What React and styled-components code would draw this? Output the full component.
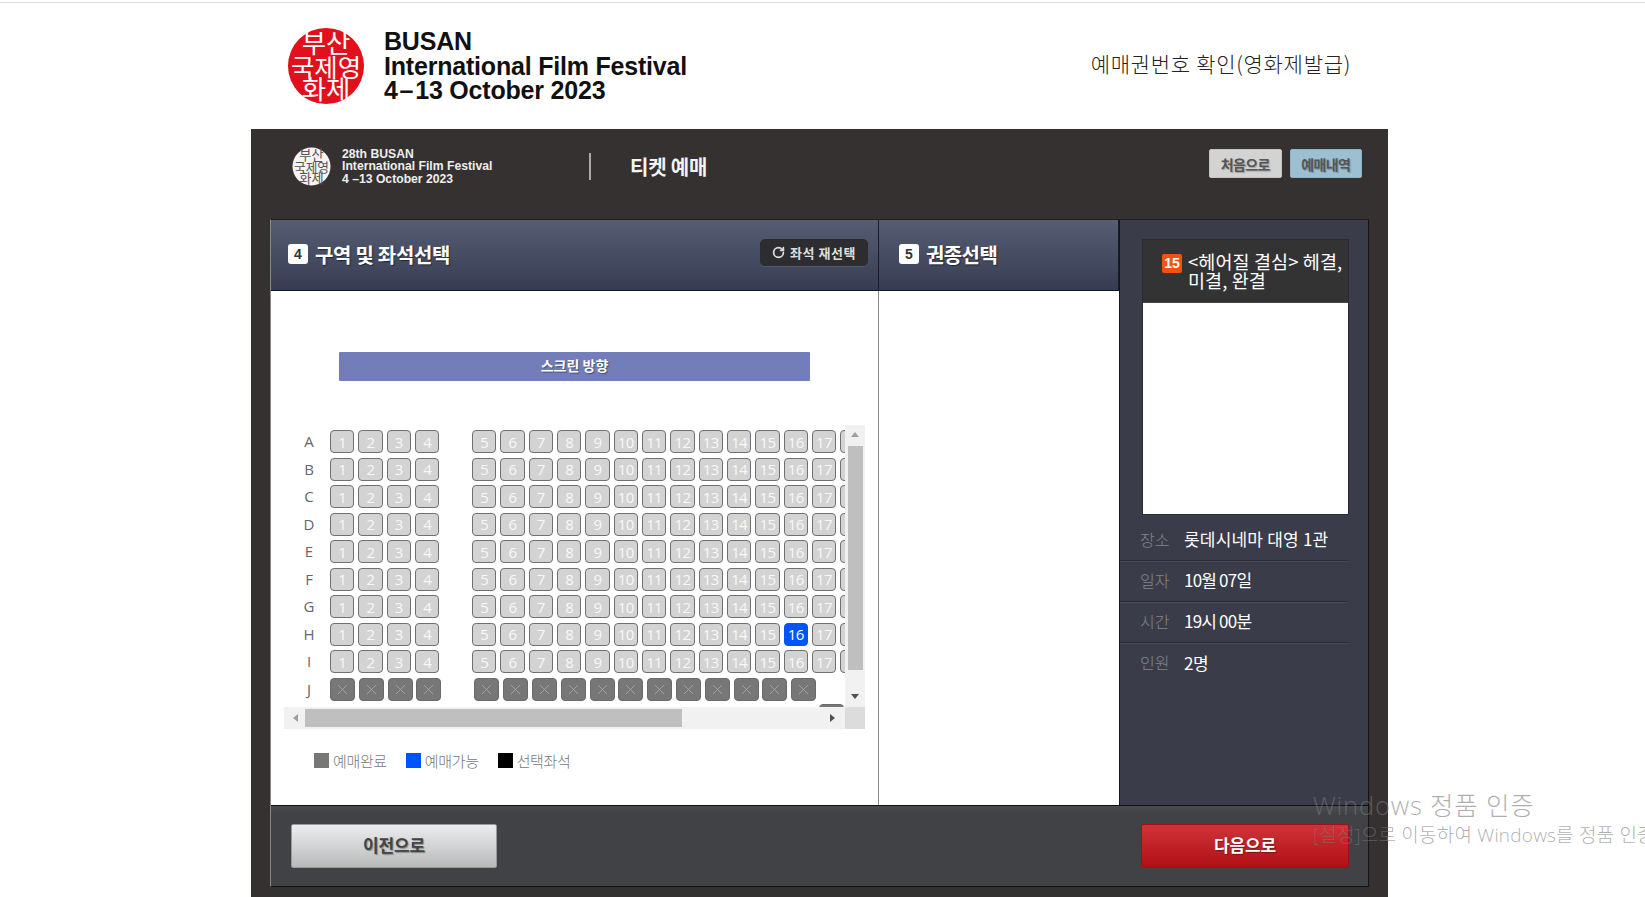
import React from 'react';
import styled, { createGlobalStyle } from 'styled-components';
import { RotateCw, X } from 'lucide-react';

const KR = `"Noto Sans CJK KR", "Liberation Sans", sans-serif`;

const GlobalStyle = createGlobalStyle`
    html, body {
        margin: 0;
        padding: 0;
        height: 897px;
        overflow: hidden;
        background: #fff;
        font-family: ${KR};
    }
    * { box-sizing: border-box; }
`;

const Page = styled.div`
    position: relative;
    width: 1645px;
    height: 897px;
    overflow: hidden;
    padding-top: 2px;
`;

const TopLine = styled.div`
    height: 1px;
    background: #dcdcdc;
`;

const Header = styled.header`
    width: 1137px;
    height: 126px;
    margin-left: 251px;
    padding: 0 37px 0 36px;
    display: flex;
    align-items: center;
    justify-content: space-between;
`;

const LogoRow = styled.div`
    display: flex;
    align-items: center;
    gap: ${p => p.$gap}px;
`;

const SmallLogoRow = styled(LogoRow)`
    margin-top: -2px;
`;

const BigLogoText = styled.div`
    font-family: "Liberation Sans", Arial, sans-serif;
    font-weight: bold;
    font-size: 25px;
    line-height: 24.5px;
    color: #111;
    letter-spacing: -0.2px;
`;

const TicketLink = styled.a`
    font-size: 21px;
    font-weight: 300;
    color: #222;
    letter-spacing: 0.7px;
    margin-top: -6px;
`;

const Panel = styled.div`
    width: 1137px;
    height: 768px;
    margin-left: 251px;
    background: #353131;
    padding-left: 19px;
`;

const TopBar = styled.div`
    height: 90px;
    width: 1092px;
    display: flex;
    align-items: flex-start;
    padding: 20px 0 0 22px;
`;

const SmallLogoText = styled.div`
    font-family: "Liberation Sans", Arial, sans-serif;
    font-weight: bold;
    font-size: 12.2px;
    line-height: 12.4px;
    color: #eee;
    width: 247px;
`;

const BarDivider = styled.span`
    width: 2px;
    height: 27px;
    margin: 4px 39px 0 0;
    background: #aaa;
`;

const TicketTitle = styled.h1`
    margin: 4px 0 0;
    font-size: 20px;
    line-height: 28px;
    font-weight: bold;
    color: #f4f4f4;
    letter-spacing: -0.2px;
`;

const TopActions = styled.div`
    margin-left: auto;
    display: flex;
    gap: 8px;
`;

const TopButton = styled.button`
    width: 72.5px;
    height: 29px;
    padding: 0;
    border: 1px solid ${p => (p.$blue ? '#8fb2c5' : '#c4c4c4')};
    border-radius: 2px;
    background: ${p => (p.$blue ? '#9dbfd2' : '#d3d3d3')};
    color: #555;
    font-family: ${KR};
    font-size: 14px;
    font-weight: bold;
    letter-spacing: -0.6px;
    text-shadow: 1px 1px 1px rgba(0, 0, 0, 0.25);
`;

const Main = styled.div`
    width: 1099px;
    height: 668px;
    border: 1px solid #141414;
    border-left-color: #8a8880;
    border-top-color: #1e1e1e;
`;

const Columns = styled.div`
    display: grid;
    grid-template-columns: 608px 240px 249px;
    height: 585px;
`;

const SeatColumn = styled.section`
    display: flex;
    flex-direction: column;
    min-width: 0;
    background: #fff;
`;

const ColHeader = styled.div`
    height: 71px;
    flex: none;
    display: flex;
    align-items: center;
    padding: 0 10px 2px ${p => p.$pad}px;
    border-bottom: 1px solid #15161c;
    border-right: 1px solid #1c1d24;
    background: linear-gradient(#565e74, #373c52);
`;

const StepBadge = styled.span`
    width: 20px;
    height: 20px;
    border-radius: 3px;
    background: #fff;
    color: #333;
    font-family: "Liberation Sans", sans-serif;
    font-size: 14px;
    font-weight: bold;
    display: flex;
    align-items: center;
    justify-content: center;
    margin-right: 7px;
`;

const ColTitle = styled.h2`
    margin: 0;
    font-size: 20px;
    font-weight: bold;
    color: #fff;
    letter-spacing: ${p => p.$spacing}px;
    text-shadow: 1px 1px 1px rgba(0, 0, 0, 0.5);
`;

const ResetButton = styled.button`
    margin: -2px 0 0 auto;
    width: 108px;
    height: 28px;
    padding: 0;
    display: flex;
    align-items: center;
    justify-content: center;
    gap: 5px;
    border: 0;
    border-bottom: 1px solid #555a6c;
    border-radius: 5px;
    background: #2d2d2f;
    color: #ddd;
    font-family: ${KR};
    font-size: 13px;
    font-weight: bold;
    letter-spacing: 0.5px;
`;

const ColBody = styled.div`
    flex: 1;
    border-right: 1px solid #8a8a8a;
`;

const SeatBody = styled(ColBody)`
    padding: 61px 0 0 13px;
`;

const ScreenBar = styled.div`
    width: 471px;
    height: 29px;
    margin-left: 55px;
    background: #727dba;
    border-radius: 1px;
    color: #fff;
    font-size: 14px;
    font-weight: bold;
    letter-spacing: 0;
    line-height: 27px;
    text-align: center;
    text-shadow: 1px 1px 1px rgba(0, 0, 0, 0.4);
`;

const ScrollBox = styled.div`
    width: 581px;
    height: 304px;
    margin-top: 44px;
    display: grid;
    grid-template-columns: 561px 20px;
    grid-template-rows: 282px 22px;
`;

const SeatViewport = styled.div`
    overflow: hidden;
    padding-top: 5px;
`;

const SeatRow = styled.div`
    display: flex;
    height: 23px;
    margin-bottom: 4.5px;
    width: 620px;
    padding-left: ${p => p.$indent || 0}px;
    margin-top: ${p => (p.$indent ? -1 : 0)}px;
`;

const RowLabel = styled.span`
    flex: none;
    width: 46px;
    padding-left: 4px;
    text-align: center;
    font-family: "Open Sans", sans-serif;
    font-size: 15px;
    line-height: 23px;
    color: #666;
`;

const Seat = styled.span`
    flex: none;
    height: 23px;
    width: ${p => (p.$sold ? 25 : 24.33)}px;
    margin-right: ${p => (p.$sold ? 3.8 : 4)}px;
    margin-left: ${p => (p.$aisle ? (p.$sold ? 29.2 : 28.7) : 0)}px;
    padding-top: ${p => (p.$sold ? 0 : 1)}px;
    border-radius: 4px;
    border: 1px solid ${p => (p.$selected ? '#0054ff' : p.$sold ? '#6a6a6a' : '#707070')};
    background: ${p => (p.$selected ? '#0054ff' : p.$sold ? '#777' : '#d3d3d3')};
    color: ${p => (p.$sold ? '#a8a8a8' : p.$selected ? '#fff' : '#f8f8f8')};
    font-family: "Open Sans", sans-serif;
    font-size: 15px;
    line-height: 21px;
    letter-spacing: -0.6px;
    text-align: center;
    display: flex;
    align-items: center;
    justify-content: center;
    overflow: hidden;
`;

const ScrollTrack = styled.div`
    background: #f1f1f1;
    display: flex;
    flex-direction: column;
    align-items: center;
    padding: 7px 0 8px;
`;

const ScrollThumbV = styled.div`
    width: 15px;
    height: 224px;
    margin: 9px 0 auto;
    background: #bfbfbf;
`;

const ScrollTrackH = styled.div`
    background: #f1f1f1;
    display: flex;
    align-items: center;
    padding: 0 10px 0 9px;
`;

const ScrollThumbH = styled.div`
    width: 377px;
    height: 18px;
    margin: 0 auto 0 7px;
    background: #bfbfbf;
`;

const ScrollCorner = styled.div`
    background: #dcdcdc;
`;

const Arrow = styled.span`
    width: 0;
    height: 0;
    border-style: solid;
    border-color: transparent;
    ${p => p.$dir === 'up' && 'border-width: 0 4.5px 5px; border-bottom-color: #a0a0a0;'}
    ${p => p.$dir === 'down' && 'border-width: 5px 4.5px 0; border-top-color: #505050;'}
    ${p => p.$dir === 'left' && 'border-width: 4.5px 5px 4.5px 0; border-right-color: #a0a0a0;'}
    ${p => p.$dir === 'right' && 'border-width: 4.5px 0 4.5px 5px; border-left-color: #505050;'}
`;

const Legend = styled.div`
    display: flex;
    margin: 24px 0 0 30px;
    gap: 19px;
`;

const LegendItem = styled.div`
    display: flex;
    align-items: center;
    gap: 4px;
    height: 15px;
    font-size: 15px;
    font-weight: 300;
    color: #777;
    letter-spacing: -0.35px;
`;

const Swatch = styled.i`
    width: 15px;
    height: 15px;
    background: ${p => p.$color};
`;

const InfoColumn = styled.aside`
    background: #3a3d49;
    border-left: 1px solid #15161c;
    padding-top: 19px;
`;

const MovieBox = styled.div`
    width: 207px;
    height: 276px;
    margin-left: 22px;
    border: 1px solid #2a2b30;
    background: #fff;
    display: flex;
    flex-direction: column;
`;

const MovieHead = styled.div`
    height: 63px;
    flex: none;
    background: #333;
    padding: 12px 0 0 19px;
    display: flex;
    gap: 6px;
    border-bottom: 1px solid #45454a;
`;

const AgeBadge = styled.span`
    flex: none;
    width: 20px;
    height: 19px;
    margin-top: 2px;
    border-radius: 2px;
    background: #f0520f;
    color: #fff;
    font-family: "Liberation Sans", sans-serif;
    font-size: 14px;
    font-weight: bold;
    line-height: 19px;
    text-align: center;
`;

const MovieTitle = styled.div`
    color: #fff;
    font-size: 18.5px;
    line-height: 19px;
    letter-spacing: 0.1px;
    white-space: nowrap;
`;

const InfoList = styled.dl`
    margin: 5px 0 0;
    width: 227px;
`;

const InfoRow = styled.div`
    height: 41px;
    display: flex;
    align-items: center;
    padding: 0 0 3px 20px;
    border-bottom: ${p => (p.$last ? '0' : '1px solid #2a2c35')};
    box-shadow: ${p => (p.$last ? 'none' : '0 1px 0 #494c58')};
`;

const InfoLabel = styled.dt`
    width: 44px;
    font-size: 16px;
    font-weight: 300;
    color: #84858c;
`;

const InfoValue = styled.dd`
    margin: 0;
    font-size: 17px;
    color: #fff;
    letter-spacing: ${p => p.$spacing}px;
`;

const BottomBar = styled.div`
    height: 81px;
    display: flex;
    align-items: flex-start;
    justify-content: space-between;
    padding: 18px 19px 0 20px;
    border-top: 1px solid #111;
    background: linear-gradient(#4a4b4f 0, #414246 8px);
`;

const NavButton = styled.button`
    width: ${p => (p.$primary ? 208 : 206)}px;
    height: 44px;
    padding: 0 0 4px;
    border-radius: 2px;
    border: 1px solid ${p => (p.$primary ? '#a01015' : '#999')};
    background: ${p => (p.$primary
        ? 'linear-gradient(#cf3339, #b01015)'
        : 'linear-gradient(#ecedef, #b8b9b9)')};
    color: ${p => (p.$primary ? '#fff' : '#444')};
    font-family: ${KR};
    font-size: 17px;
    font-weight: bold;
    letter-spacing: -0.2px;
    text-shadow: 1px 1px 1px rgba(0, 0, 0, 0.35);
`;

const Watermark = styled.div`
    position: absolute;
    left: 1313px;
    top: 787px;
    width: 340px;
    white-space: nowrap;
    pointer-events: none;
    color: rgba(120, 120, 120, 0.6);
    font-family: "Open Sans", ${KR};
    font-weight: 300;
`;

const WatermarkTitle = styled.div`
    font-size: 25.5px;
    line-height: 36px;
    letter-spacing: 0.8px;
`;

const WatermarkSub = styled.div`
    font-size: 19px;
    line-height: 24px;
    letter-spacing: 0.2px;
`;

const Seal = ({ size, fill, ink }) => (
    <svg width={size} height={size} viewBox="0 0 80 80">
        <circle cx="40" cy="40" r="39" fill={fill} />
        <g fill={ink} fontFamily={KR} fontWeight="400" textAnchor="middle">
            <text x="40" y="27" fontSize="27" textLength="50" lengthAdjust="spacingAndGlyphs">부산</text>
            <text x="40" y="51" fontSize="26" textLength="72" lengthAdjust="spacingAndGlyphs">국제영</text>
            <text x="40" y="74" fontSize="27" textLength="50" lengthAdjust="spacingAndGlyphs">화제</text>
        </g>
    </svg>
);

const LEFT_SEATS = [1, 2, 3, 4];
const RIGHT_SEATS = [5, 6, 7, 8, 9, 10, 11, 12, 13, 14, 15, 16, 17, 18];
const ROWS = ['A', 'B', 'C', 'D', 'E', 'F', 'G', 'H', 'I'];
const SOLD_RIGHT = Array.from({ length: 12 }, (_, i) => i);

const INFO = [
    ['장소', '롯데시네마 대영 1관', 0.2],
    ['일자', '10월 07일', -0.8],
    ['시간', '19시 00분', -0.8],
    ['인원', '2명', -0.5],
];

const SoldMark = () => <X size={17} strokeWidth={1.2} />;

export default function App() {
    return (
        <Page>
            <GlobalStyle />
            <TopLine />
            <Header>
                <LogoRow $gap={19}>
                    <Seal size={78} fill="#e2101c" ink="#fff" />
                    <BigLogoText>
                        BUSAN<br />
                        International Film Festival<br />
                        4{'\u200A'}–{'\u200A'}13 October 2023
                    </BigLogoText>
                </LogoRow>
                <TicketLink>예매권번호 확인(영화제발급)</TicketLink>
            </Header>
            <Panel>
                <TopBar>
                    <SmallLogoRow $gap={11}>
                        <Seal size={39} fill="#f4f4f4" ink="#555" />
                        <SmallLogoText>
                            28th BUSAN<br />
                            International Film Festival<br />
                            4 –13 October 2023
                        </SmallLogoText>
                    </SmallLogoRow>
                    <BarDivider />
                    <TicketTitle>티켓 예매</TicketTitle>
                    <TopActions>
                        <TopButton>처음으로</TopButton>
                        <TopButton $blue>예매내역</TopButton>
                    </TopActions>
                </TopBar>
                <Main>
                    <Columns>
                        <SeatColumn>
                            <ColHeader $pad={17}>
                                <StepBadge>4</StepBadge>
                                <ColTitle $spacing={-0.3}>구역 및 좌석선택</ColTitle>
                                <ResetButton>
                                    <RotateCw size={13} strokeWidth={3.2} />
                                    좌석 재선택
                                </ResetButton>
                            </ColHeader>
                            <SeatBody>
                                <ScreenBar>스크린 방향</ScreenBar>
                                <ScrollBox>
                                    <SeatViewport>
                                        {ROWS.map(row => (
                                            <SeatRow key={row}>
                                                <RowLabel>{row}</RowLabel>
                                                {LEFT_SEATS.map(n => <Seat key={n}>{n}</Seat>)}
                                                {RIGHT_SEATS.map(n => (
                                                    <Seat
                                                        key={n}
                                                        $aisle={n === 5}
                                                        $selected={row === 'H' && n === 16}
                                                    >
                                                        {n}
                                                    </Seat>
                                                ))}
                                            </SeatRow>
                                        ))}
                                        <SeatRow>
                                            <RowLabel>J</RowLabel>
                                            {LEFT_SEATS.map(n => <Seat key={n} $sold><SoldMark /></Seat>)}
                                            {SOLD_RIGHT.map(n => <Seat key={n} $sold $aisle={n === 0}><SoldMark /></Seat>)}
                                        </SeatRow>
                                        <SeatRow $indent={535}>
                                            <Seat $sold />
                                        </SeatRow>
                                    </SeatViewport>
                                    <ScrollTrack>
                                        <Arrow $dir="up" />
                                        <ScrollThumbV />
                                        <Arrow $dir="down" />
                                    </ScrollTrack>
                                    <ScrollTrackH>
                                        <Arrow $dir="left" />
                                        <ScrollThumbH />
                                        <Arrow $dir="right" />
                                    </ScrollTrackH>
                                    <ScrollCorner />
                                </ScrollBox>
                                <Legend>
                                    <LegendItem><Swatch $color="#777" />예매완료</LegendItem>
                                    <LegendItem><Swatch $color="#0054ff" />예매가능</LegendItem>
                                    <LegendItem><Swatch $color="#000" />선택좌석</LegendItem>
                                </Legend>
                            </SeatBody>
                        </SeatColumn>
                        <SeatColumn>
                            <ColHeader $pad={20}>
                                <StepBadge>5</StepBadge>
                                <ColTitle $spacing={-0.6}>권종선택</ColTitle>
                            </ColHeader>
                        </SeatColumn>
                        <InfoColumn>
                            <MovieBox>
                                <MovieHead>
                                    <AgeBadge>15</AgeBadge>
                                    <MovieTitle>
                                        &lt;헤어질 결심&gt; 헤결,<br />
                                        미결, 완결
                                    </MovieTitle>
                                </MovieHead>
                            </MovieBox>
                            <InfoList>
                                {INFO.map(([label, value, spacing], i) => (
                                    <InfoRow key={label} $last={i === INFO.length - 1}>
                                        <InfoLabel>{label}</InfoLabel>
                                        <InfoValue $spacing={spacing}>{value}</InfoValue>
                                    </InfoRow>
                                ))}
                            </InfoList>
                        </InfoColumn>
                    </Columns>
                    <BottomBar>
                        <NavButton>이전으로</NavButton>
                        <NavButton $primary>다음으로</NavButton>
                    </BottomBar>
                </Main>
            </Panel>
            <Watermark>
                <WatermarkTitle>Windows 정품 인증</WatermarkTitle>
                <WatermarkSub>[설정]으로 이동하여 Windows를 정품 인증합니다.</WatermarkSub>
            </Watermark>
        </Page>
    );
}
